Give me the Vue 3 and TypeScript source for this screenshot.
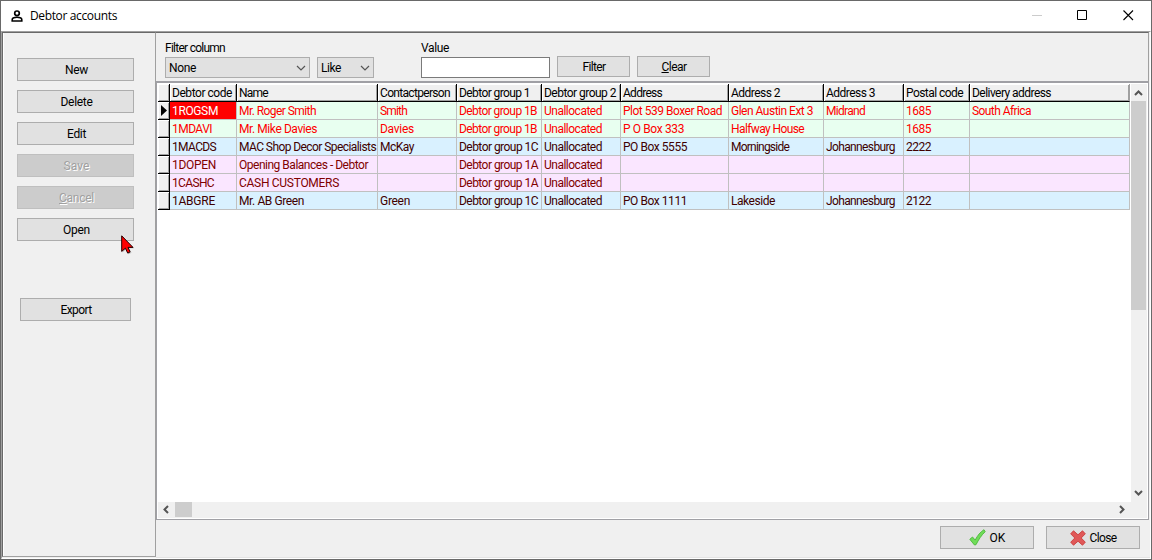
<script setup lang="ts">
interface Column { title: string; width: number; fit: number }
type Cell = [string, number] | null
interface Row { tone: 'green' | 'blue' | 'pink'; cells: Cell[] }

// Spreads the letters of a label so that it takes the given width in pixels.
const vFit = {
  mounted(el: HTMLElement, binding: { value: number }) {
    const count = (el.textContent ?? '').trim().length
    if (!binding.value || !count) return
    const natural = el.getBoundingClientRect().width
    el.style.letterSpacing = `${(binding.value - natural) / count}px`
  },
}

const columns: Column[] = [
  { title: 'Debtor code', width: 67, fit: 60 },
  { title: 'Name', width: 141, fit: 29 },
  { title: 'Contactperson', width: 79, fit: 70 },
  { title: 'Debtor group 1', width: 85, fit: 71 },
  { title: 'Debtor group 2', width: 79, fit: 72 },
  { title: 'Address', width: 108, fit: 39 },
  { title: 'Address 2', width: 95, fit: 49 },
  { title: 'Address 3', width: 80, fit: 49 },
  { title: 'Postal code', width: 66, fit: 57 },
  { title: 'Delivery address', width: 160, fit: 79 },
]
const template = columns.map((c) => `${c.width}px`).join(' ')

const rows: Row[] = [
  { tone: 'green', cells: [['1ROGSM', 46], ['Mr. Roger Smith', 77], ['Smith', 27], ['Debtor group 1B', 78], ['Unallocated', 58], ['Plot 539 Boxer Road', 99], ['Glen Austin Ext 3', 82], ['Midrand', 39], ['1685', 25], ['South Africa', 59]] },
  { tone: 'green', cells: [['1MDAVI', 40], ['Mr. Mike Davies', 78], ['Davies', 34], ['Debtor group 1B', 78], ['Unallocated', 58], ['P O Box 333', 61], ['Halfway House', 73], null, ['1685', 25], null] },
  { tone: 'blue', cells: [['1MACDS', 44], ['MAC Shop Decor Specialists', 137], ['McKay', 34], ['Debtor group 1C', 79], ['Unallocated', 58], ['PO Box 5555', 64], ['Morningside', 58], ['Johannesburg', 69], ['2222', 25], null] },
  { tone: 'pink', cells: [['1DOPEN', 44], ['Opening Balances - Debtor', 129], null, ['Debtor group 1A', 79], ['Unallocated', 58], null, null, null, null, null] },
  { tone: 'pink', cells: [['1CASHC', 42], ['CASH CUSTOMERS', 100], null, ['Debtor group 1A', 79], ['Unallocated', 58], null, null, null, null, null] },
  { tone: 'blue', cells: [['1ABGRE', 43], ['Mr. AB Green', 65], ['Green', 30], ['Debtor group 1C', 79], ['Unallocated', 58], ['PO Box 1111', 64], ['Lakeside', 44], ['Johannesburg', 69], ['2122', 25], null] },
]

const actions = [
  { label: 'New', fit: 23, disabled: false, key: false },
  { label: 'Delete', fit: 32, disabled: false, key: false },
  { label: 'Edit', fit: 19, disabled: false, key: false },
  { label: 'Save', fit: 26, disabled: true, key: false },
  { label: 'Cancel', fit: 35, disabled: true, key: true },
  { label: 'Open', fit: 27, disabled: false, key: false },
]
</script>

<template>
  <div class="window">
    <header class="titlebar">
      <svg class="app-icon" width="12" height="12" viewBox="0 0 12 12">
        <circle cx="6" cy="3.3" r="2.3" fill="none" stroke="#000" stroke-width="1.7" />
        <path d="M1.2 11v-1.3C1.2 8 3.5 7.3 6 7.3s4.800.7 4.800 2.400V11z" fill="none" stroke="#000" stroke-width="1.600" />
      </svg>
      <span class="title"><span v-fit="87">Debtor accounts</span></span>
      <svg class="controls" width="102" height="12" viewBox="0 0 102 12" fill="none">
        <path d="M0 6.500h10" stroke="#ccc" />
        <path d="M45.500 1.500h9v9h-9z" stroke="#000" />
        <path d="M91.500 1.500l9.500 9.500M101 1.500l-9.500 9.500" stroke="#000" stroke-width="1.100" />
      </svg>
    </header>

    <div class="body">
      <aside class="sidebar">
        <button v-for="a in actions" :key="a.label" class="btn side" :class="{ disabled: a.disabled }">
          <span v-fit="a.fit"><template v-if="a.key"><u>{{ a.label[0] }}</u>{{ a.label.slice(1) }}</template><template v-else>{{ a.label }}</template></span>
        </button>
        <button class="btn export"><span v-fit="31">Export</span></button>
        <svg class="cursor" width="15" height="20" viewBox="0 0 15 20">
          <path d="M1.500 1.500v16l3.700-3.300 2.300 5 3-1.400-2.200-4.600h4.900z" fill="#888" opacity=".45" />
          <path d="M.7.800v15.600l3.700-3.200 2.300 4.900 2.400-1.200-2.100-4.500h5z" fill="#f00" stroke="#200" stroke-width="1" />
        </svg>
      </aside>

      <main class="main">
        <section class="filters">
          <div class="field column">
            <label><span v-fit="60">Filter column</span></label>
            <div class="select"><span v-fit="27">None</span>
              <svg width="10" height="6" viewBox="0 0 10 6"><path d="M1 1l4 4 4-4" fill="none" stroke="#555" stroke-width="1.200" /></svg>
            </div>
          </div>
          <div class="select like"><span v-fit="20">Like</span>
            <svg width="10" height="6" viewBox="0 0 10 6"><path d="M1 1l4 4 4-4" fill="none" stroke="#555" stroke-width="1.200" /></svg>
          </div>
          <div class="field value">
            <label><span v-fit="28">Value</span></label>
            <input type="text" />
          </div>
          <button class="btn small"><span v-fit="23">Filter</span></button>
          <button class="btn small"><span v-fit="25"><u>C</u>lear</span></button>
        </section>

        <section class="grid">
          <div class="table">
            <div class="line head">
              <div class="mark"></div>
              <div class="cells" :style="{ gridTemplateColumns: template }">
                <div v-for="c in columns" :key="c.title" class="th"><span v-fit="c.fit">{{ c.title }}</span></div>
              </div>
            </div>
            <div v-for="(r, i) in rows" :key="i" class="line row" :class="[r.tone, { current: i === 0 }]">
              <div class="mark">
                <svg v-if="i === 0" width="6" height="11" viewBox="0 0 6 11"><path d="M0 0l6 5.500L0 11z" fill="#000" /></svg>
              </div>
              <div class="cells" :style="{ gridTemplateColumns: template }">
                <div v-for="(c, j) in r.cells" :key="j" class="td"><span v-if="c" v-fit="c[1]">{{ c[0] }}</span></div>
              </div>
            </div>
          </div>
          <div class="vbar">
            <svg width="15" height="17" viewBox="0 0 15 17"><path d="M4 11l3.500-3.500L11 11" fill="none" stroke="#555" stroke-width="2" /></svg>
            <i class="thumb"></i>
            <svg class="end" width="15" height="18" viewBox="0 0 15 18"><path d="M4 7l3.500 3.500L11 7" fill="none" stroke="#555" stroke-width="2" /></svg>
          </div>
          <div class="hbar">
            <svg width="17" height="16" viewBox="0 0 17 16"><path d="M10 4L6.500 7.500 10 11" fill="none" stroke="#555" stroke-width="2" /></svg>
            <i class="thumb"></i>
            <svg class="end" width="17" height="16" viewBox="0 0 17 16"><path d="M6 4l3.500 3.500L6 11" fill="none" stroke="#555" stroke-width="2" /></svg>
          </div>
        </section>

        <footer class="footer">
          <button class="btn ok">
            <svg width="17" height="17" viewBox="0 0 17 17"><path d="M.8 10.300L3.500 8l2.700 3.100C8.500 6.500 11.300 3 15 .7l1.200 2C12.500 6 9.700 10.500 7 15.700L5.500 16z" fill="#70dc58" stroke="#4bb83b" stroke-width=".9" /></svg>
            <span v-fit="16">OK</span>
          </button>
          <button class="btn close">
            <svg width="16" height="16" viewBox="0 0 16 16"><path d="M3.500.8L8 4.800 12.500.8l2.800 3L11.200 8l4.100 4.200-2.800 3L8 11.200l-4.500 4-2.800-3L4.800 8 .7 3.800z" fill="#e05858" stroke="#c93b3b" stroke-width=".9" /></svg>
            <span v-fit="27">Close</span>
          </button>
        </footer>
      </main>
    </div>
  </div>
</template>

<style>
html, body { margin: 0; overflow: hidden; }
</style>

<style scoped>
.window {
  box-sizing: border-box; width: 1152px; height: 560px; display: flex; flex-direction: column;
  border: 1px solid #696969; background: #fff; color: #000;
  font: 12px/16px Roboto, "Liberation Sans", sans-serif;
}
.window * { box-sizing: border-box; }
span { display: inline-block; white-space: pre; flex: none; }
.titlebar { height: 30px; flex: none; display: flex; align-items: center; padding-left: 10px; }
.app-icon { margin-top: -1px; }
.title { margin-left: 7px; font: 12px/16px "Open Sans", "Noto Sans", sans-serif; }
.controls { margin: -2px 17px 0 auto; }
.body {
  flex: 1; min-height: 0; display: flex; background: #f0f0f0;
  border-top: 1px solid #a0a0a0; border-left: 1px solid #a0a0a0;
  border-right: 1px solid #fff; border-bottom: 1px solid #fff;
}
.sidebar {
  position: relative; width: 154px; flex: none; height: 525px; padding: 25px 0 0 14px;
  border: 1px solid #a0a0a0; border-top-color: #696969; border-left-color: #696969;
  box-shadow: inset 1px 0 #fff;
}
.btn {
  display: flex; align-items: center; justify-content: center; padding: 0; margin: 0;
  font: inherit; color: #000; background: #e1e1e1; border: 1px solid #adadad;
}
.btn.side { width: 117px; height: 23px; margin-bottom: 9px; padding-left: 2px; }
.btn.side.disabled { background: #ccc; border-color: #bfbfbf; color: #a0a0a0; text-shadow: 1px 1px #fff; }
.btn.export { width: 111px; height: 23px; margin: 57px 0 0 3px; padding-left: 1px; }
.btn u { text-underline-offset: 1px; }
.cursor { position: absolute; left: 118px; top: 202px; }
.main { flex: 1; min-width: 0; display: flex; flex-direction: column; }
.filters {
  height: 50px; width: 993px; flex: none; display: flex; align-items: flex-end; padding: 0 0 3px 9px;
  border-top: 1px solid #696969; border-right: 1px solid #a0a0a0; border-bottom: 1px solid #a0a0a5;
}
.field { display: flex; flex-direction: column; }
.field label { height: 17px; line-height: 16px; display: block; }
.field.column { width: 145px; margin-right: 7px; }
.field.value { width: 129px; margin: 0 7px 0 47px; }
.field input { width: 100%; height: 21px; padding: 0 3px; border: 1px solid #7a7a7a; background: #fff; font: inherit; }
.select {
  height: 21px; display: flex; align-items: center; justify-content: space-between;
  padding: 1px 3px 0 3px; background: #e1e1e1; border: 1px solid #adadad;
}
.like { width: 57px; }
.btn.small { width: 73px; height: 21px; margin: 0 7px 1px 0; padding-left: 1px; }
.grid {
  height: 438px; width: 993px; flex: none; display: grid; background: #fff;
  grid-template-columns: 973px 16px; grid-template-rows: 418px 16px;
  border: 1px solid #a0a0a5; padding: 1px 1px 1px 1px;
}
.table { overflow: hidden; }
.line { display: flex; height: 18px; }
.cells { display: grid; flex: none; }
.mark {
  width: 12px; flex: none; background: #f0f0f0; border-right: 1px solid #000; border-bottom: 1px solid #000;
  box-shadow: inset 1px 1px #fff, inset -1px -1px #a0a0a0; display: flex; align-items: center; justify-content: center;
}
.th {
  padding: 1px 0 0 2px; line-height: 16px; background: #f0f0f0; overflow: hidden;
  border-right: 1px solid #000; border-bottom: 1px solid #000;
  box-shadow: inset 1px 1px #fff, inset -1px -1px #a0a0a0;
}
.td { padding: 1px 0 0 2px; line-height: 17px; border-right: 1px solid #c0c0c0; border-bottom: 1px solid #c0c0c0; overflow: hidden; }
.th:last-child { border-right-color: #a0a0a0; }
.green { color: #f00; }
.green .td { background: #e8fff0; }
.blue { color: #400000; }
.blue .td { background: #d9f1ff; }
.pink { color: #800000; }
.pink .td { background: #fae6ff; }
.current .td:first-child { background: #f00; color: #fff; }
.vbar { background: #f0f0f0; display: flex; flex-direction: column; }
.vbar .thumb { height: 209px; background: #cdcdcd; margin-right: 1px; }
.vbar .end { margin-top: auto; }
.hbar { grid-column: 1 / 3; background: #f0f0f0; display: flex; }
.hbar .thumb { width: 17px; height: 15px; background: #cdcdcd; }
.hbar .end { margin: 0 16px 0 auto; }
.footer { flex: 1; display: flex; justify-content: flex-end; gap: 12px; padding: 6px 10px 0 0; border-bottom: 1px solid #e3e3e3; }
.footer .btn { width: 94px; height: 23px; gap: 4px; }
</style>
